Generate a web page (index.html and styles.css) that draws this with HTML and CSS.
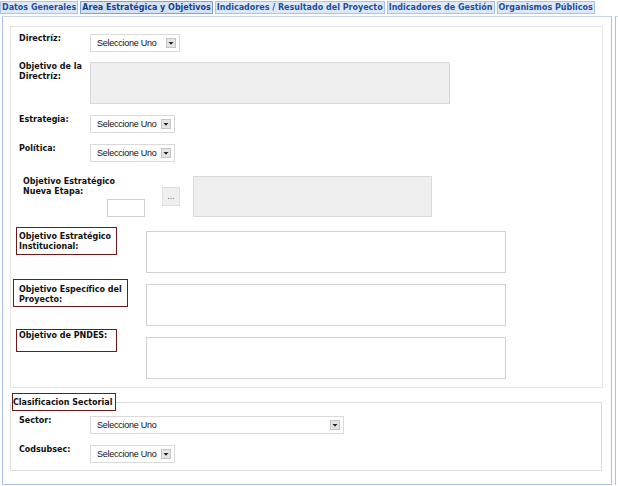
FILE: index.html
```html
<!DOCTYPE html>
<html lang="es">
<head>
<meta charset="utf-8">
<title>Area Estratégica y Objetivos</title>
<link rel="stylesheet" href="styles.css">
</head>
<body>
<div class="tabs">
  <span class="tab">Datos Generales</span>
  <span class="tab active">Area Estratégica y Objetivos</span>
  <span class="tab">Indicadores / Resultado del Proyecto</span>
  <span class="tab">Indicadores de Gestión</span>
  <span class="tab">Organismos Públicos</span>
</div>
<div class="stage">
  <div class="panel">
    <div class="inner">
      <div class="row">
        <div class="lbl">Directríz:</div>
        <div class="select w90"><span class="opt">Seleccione Uno</span><svg class="arrow" width="10" height="10" viewBox="0 0 10 10"><rect x="0.5" y="0.5" width="9" height="9" fill="#e4e4e4" stroke="#c4c4c4"/><path d="M2.5 4 H7.5 L5 6.8 Z" fill="#222"/></svg></div>
      </div>
      <div class="row mt10">
        <div class="lbl">Objetivo de la<br>Directríz:</div>
        <div class="area grey w360"></div>
      </div>
      <div class="row mt11">
        <div class="lbl">Estrategia:</div>
        <div class="select w85"><span class="opt">Seleccione Uno</span><svg class="arrow" width="10" height="10" viewBox="0 0 10 10"><rect x="0.5" y="0.5" width="9" height="9" fill="#e4e4e4" stroke="#c4c4c4"/><path d="M2.5 4 H7.5 L5 6.8 Z" fill="#222"/></svg></div>
      </div>
      <div class="row mt11">
        <div class="lbl">Política:</div>
        <div class="select w85"><span class="opt">Seleccione Uno</span><svg class="arrow" width="10" height="10" viewBox="0 0 10 10"><rect x="0.5" y="0.5" width="9" height="9" fill="#e4e4e4" stroke="#c4c4c4"/><path d="M2.5 4 H7.5 L5 6.8 Z" fill="#222"/></svg></div>
      </div>
      <div class="row mt14">
        <div class="etapa-col">
          <div class="lbl etapa-lbl">Objetivo Estratégico<br>Nueva Etapa:</div>
          <div class="small-input"></div>
        </div>
        <div class="dots">...</div>
        <div class="area grey w239"></div>
      </div>
      <div class="row mt10">
        <div class="lblcol"><div class="boxlbl inst">Objetivo Estratégico<br>Institucional:</div></div>
        <div class="area white w360 mt4"></div>
      </div>
      <div class="row mt6">
        <div class="lblcol"><div class="boxlbl espec">Objetivo Específico del<br>Proyecto:</div></div>
        <div class="area white w360 mt5"></div>
      </div>
      <div class="row mt3">
        <div class="lblcol"><div class="boxlbl pndes">Objetivo de PNDES:</div></div>
        <div class="area white w360 mt8"></div>
      </div>
    </div>
    <fieldset class="sect">
      <legend class="legend">Clasificacion Sectorial</legend>
      <div class="row">
        <div class="lbl">Sector:</div>
        <div class="select w254"><span class="opt">Seleccione Uno</span><svg class="arrow" width="10" height="10" viewBox="0 0 10 10"><rect x="0.5" y="0.5" width="9" height="9" fill="#e4e4e4" stroke="#c4c4c4"/><path d="M2.5 4 H7.5 L5 6.8 Z" fill="#222"/></svg></div>
      </div>
      <div class="row mt11">
        <div class="lbl">Codsubsec:</div>
        <div class="select w85"><span class="opt">Seleccione Uno</span><svg class="arrow" width="10" height="10" viewBox="0 0 10 10"><rect x="0.5" y="0.5" width="9" height="9" fill="#e4e4e4" stroke="#c4c4c4"/><path d="M2.5 4 H7.5 L5 6.8 Z" fill="#222"/></svg></div>
      </div>
    </fieldset>
  </div>
  <div class="side"></div>
</div>
</body>
</html>
```

FILE: styles.css
```css
* { box-sizing: border-box; }
html, body { margin: 0; padding: 0; background: #fff; }
body {
  width: 618px;
  height: 486px;
  overflow: hidden;
  font-family: "DejaVu Sans", Verdana, sans-serif;
  font-size: 8px;
  font-weight: bold;
  color: #111;
}

.tabs { display: flex; padding-top: 1px; height: 16px; }
.tab {
  height: 13px;
  line-height: 11px;
  padding: 0 1px;
  margin-right: 2px;
  border: 1px solid #a9c3ea;
  background: #dde8f8;
  color: #1f4f9f;
  white-space: nowrap;
}
.tab.active { border-color: #7ea3dc; background: #d3e2f7; color: #1a3f86; }

.stage { display: flex; }
.panel {
  margin-left: 2px;
  width: 610px;
  height: 469px;
  border: 1px solid #a9c1e8;
  border-top-color: #c9d6ec;
  padding: 9px 8px 0 7px;
}
.side {
  margin-left: 3px;
  flex: 1;
  height: 469px;
  border-left: 1px solid #a9c1e8;
  border-top: 1px solid #c9d6ec;
}

.inner { border: 1px solid #e4e4e4; padding: 7px 8px 8px 8px; }

.row { display: flex; align-items: flex-start; }
.mt3 { margin-top: 3px; }
.mt4 { margin-top: 4px; }
.mt5 { margin-top: 5px; }
.mt6 { margin-top: 6px; }
.mt8 { margin-top: 8px; }
.mt10 { margin-top: 10px; }
.mt11 { margin-top: 11px; }
.mt14 { margin-top: 14px; }

.lbl { width: 71px; line-height: 10px; flex: none; }

.select {
  height: 18px;
  border: 1px solid #dadada;
  background: #fff;
  display: flex;
  align-items: center;
  justify-content: space-between;
  padding: 0 3px 0 6px;
  flex: none;
}
.opt {
  font-family: "Liberation Sans", Arial, sans-serif;
  font-weight: normal;
  font-size: 9px;
  letter-spacing: -0.25px;
  color: #111;
  white-space: nowrap;
}
.arrow { display: block; flex: none; }
.w90 { width: 90px; }
.w85 { width: 85px; }
.w254 { width: 254px; }

.area { height: 42px; flex: none; }
.area.grey { background: #efefef; border: 1px solid #d9d9d9; }
.area.white { background: #fff; border: 1px solid #d2d2d2; }
.w360 { width: 360px; }
.w239 { width: 239px; height: 41px; }

.etapa-col { width: 143px; flex: none; }
.etapa-lbl { width: auto; padding: 1px 0 0 4px; }
.small-input {
  margin: 2px 0 0 88px;
  width: 38px;
  height: 18px;
  border: 1px solid #d0d0d0;
  background: #fff;
}
.dots {
  margin-top: 11px;
  margin-right: 13px;
  width: 18px;
  height: 19px;
  flex: none;
  background: #efefef;
  border: 1px solid #dedede;
  font-weight: normal;
  font-size: 8px;
  color: #666;
  text-align: center;
  line-height: 17px;
}

.lblcol { width: 127px; flex: none; }
.boxlbl { border: 1px solid #6e1a1a; line-height: 10px; white-space: nowrap; }
.boxlbl.inst { margin-left: -3px; width: 101px; padding: 4px 0 2px 2px; }
.boxlbl.espec { margin-left: -6px; width: 115px; padding: 5px 0 1px 5px; }
.boxlbl.pndes { margin-left: -3px; width: 101px; height: 23px; padding: 1px 0 0 2px; }

.sect {
  margin: 5px 0 0 0;
  width: 592px;
  border: 1px solid #dcdcdc;
  padding: 5px 8px 7px 8px;
  min-inline-size: 0;
}
.legend {
  margin-left: -7px;
  padding: 4px 3px 2px 0;
  border: 1px solid #6e1a1a;
  line-height: 10px;
  color: #111;
}
```
